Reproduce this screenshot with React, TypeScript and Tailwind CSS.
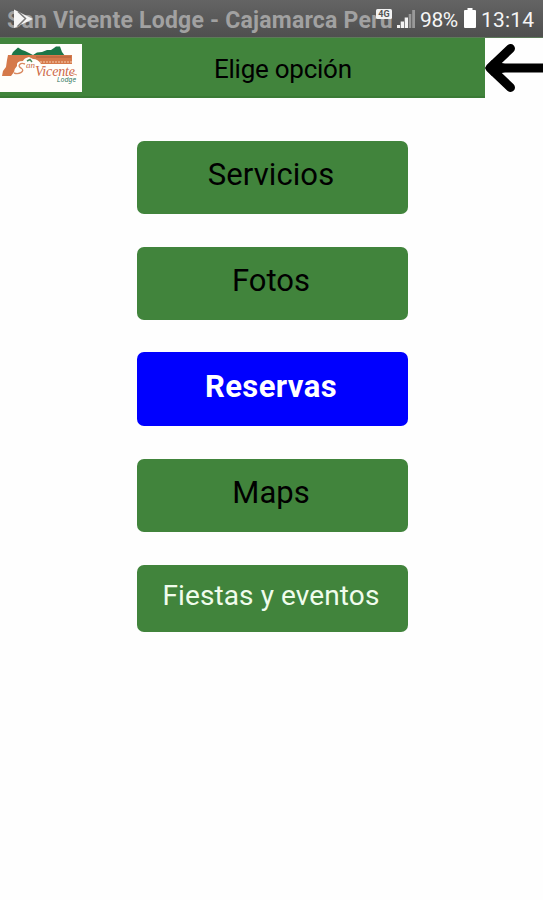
interface MenuOption {
  label: string;
  box: string;
  text: string;
}

const options: MenuOption[] = [
  {
    label: 'Servicios',
    box: 'h-[73px] bg-[#41843c] text-black',
    text: 'pt-[14px] pr-[2px] text-[31px] tracking-[0.1px]',
  },
  {
    label: 'Fotos',
    box: 'mt-[33px] h-[73px] bg-[#41843c] text-black',
    text: 'pt-[14px] pr-[2px] text-[31px]',
  },
  {
    label: 'Reservas',
    box: 'mt-[32px] h-[74px] bg-[#0000ff] text-white',
    text: 'pt-[15px] pr-[2px] text-[31px] font-bold tracking-[0.4px]',
  },
  {
    label: 'Maps',
    box: 'mt-[33px] h-[73px] bg-[#41843c] text-black',
    text: 'pt-[14px] pr-[2px] text-[31px]',
  },
  {
    label: 'Fiestas y eventos',
    box: 'mt-[33px] h-[67px] bg-[#41843c] text-[#f0fcec]',
    text: 'pt-[11px] pr-[2px] text-[28px] tracking-[0.1px]',
  },
];

function StatusBar() {
  return (
    <div className="relative h-[38px] bg-gradient-to-b from-[#646464] to-[#4f4f4f] border-b border-[#5d7a5a]">
      <h1 className="pl-[7px] text-[23px] leading-[41px] font-bold tracking-[0.22px] whitespace-nowrap text-[#a1a1a1]">
        San Vicente Lodge - Cajamarca Perú
      </h1>

      {/* System icons sit on top of the title */}
      <svg className="absolute left-[13px] top-[8px]" width="22" height="22" viewBox="0 0 22 22">
        <path d="M1 1.5L20 11L1 20Z" fill="#f5f5f5" />
        <path d="M5 3.5L12.5 10.5L4.5 18.5" fill="none" stroke="#777" strokeWidth="1.5" />
      </svg>
      <svg className="absolute left-[376px] top-[8px]" width="40" height="22" viewBox="0 0 40 22">
        <rect x="0" y="1" width="16" height="10" rx="1.5" fill="#f3f3f3" />
        <text x="8" y="9.3" textAnchor="middle" fontSize="9" fontWeight="700" fontFamily="Roboto, sans-serif" fill="#555">
          4G
        </text>
        <path d="M21 20V17H24V20ZM24.7 20V13.5H28V20ZM28.7 20V9.5H32V20Z" fill="#f3f3f3" />
        <path d="M32.7 20V6H35.3V20ZM36.2 20V2H39V20Z" fill="#999" />
      </svg>
      <span className="absolute left-[420px] top-0 text-[21px] leading-[41px] tracking-[-0.4px] text-[#f5f5f5]">
        98%
      </span>
      <svg className="absolute left-[464px] top-[8px]" width="12" height="20" viewBox="0 0 12 20">
        <path d="M3.5 0H8.5V2H11Q12 2 12 3V19Q12 20 11 20H1Q0 20 0 19V3Q0 2 1 2H3.5Z" fill="#fff" />
      </svg>
      <span className="absolute left-[481px] top-0 text-[21px] leading-[41px] tracking-[0.2px] text-[#f5f5f5]">
        13:14
      </span>
    </div>
  );
}

function Logo() {
  return (
    <svg className="shrink-0" width="82" height="48" viewBox="0 0 82 48">
      <rect width="82" height="48" fill="#fffefb" />
      <path d="M11 12L13 8L18 3.5L22 6L25 7L33 11L37 8.5L42 8L47 6L51 6L54 4L56 2.5L60 2.5L62 8L65 12Z" fill="#1d7547" />
      <path
        d="M8 11H72V20H41Q38 15 33 15L29 13Q24 14 23 17Q16 17 17 22Q14 25 14 28L11 32H2L3 27L6 23L7 16Z"
        fill="#d5794a"
      />
      <path d="M36 13H71" stroke="#b9673f" strokeWidth="1.5" />
      <path d="M40 18H72" stroke="#eab18f" strokeWidth="1.5" strokeDasharray="2 1" />
      <path d="M25 20C20 18 17 22 21 24C26 27 19 31 14 29" fill="none" stroke="#d98a62" strokeWidth="1.4" />
      <path d="M27 17L30 15.5L32 18" fill="none" stroke="#4a8a5a" strokeWidth="1.5" />
      <text x="26" y="24" fontSize="9" fontStyle="italic" fontFamily="Liberation Serif, serif" fill="#c66a48">
        an
      </text>
      <text
        x="35"
        y="32"
        fontSize="14"
        fontStyle="italic"
        textLength="40"
        fontFamily="Liberation Serif, serif"
        fill="#cd6848"
      >
        Vicente
      </text>
      <path d="M71 29L77 31" stroke="#df9a7d" strokeWidth="1" />
      <text
        x="57"
        y="38"
        fontSize="6.5"
        fontStyle="italic"
        textLength="19"
        fontFamily="Liberation Sans, sans-serif"
        fill="#2c7560"
      >
        Lodge
      </text>
    </svg>
  );
}

function Header() {
  return (
    <header className="flex h-[59.5px]">
      <div className="flex w-[484.5px] border-b-2 border-[#3a7a35] bg-[#41843c] pt-[6px]">
        <Logo />
        <h2 className="ml-[132px] mt-[5px] text-[26px] leading-[40px] tracking-[-0.25px] whitespace-nowrap text-black">
          Elige opción
        </h2>
      </div>
      <button className="w-[58.5px]" aria-label="Volver">
        <svg width="58" height="60" viewBox="0 0 58 60">
          <path d="M5 30H60" fill="none" stroke="#000" strokeWidth="9" />
          <path
            d="M25.5 10.5L5 30L25.5 49.5"
            fill="none"
            stroke="#000"
            strokeWidth="9"
            strokeLinecap="round"
            strokeLinejoin="round"
          />
          <path d="M0 30L7 22L20 26V34L7 38Z" fill="#000" />
        </svg>
      </button>
    </header>
  );
}

export default function App() {
  return (
    <div className="min-h-screen w-full overflow-hidden bg-[#fefefe] font-['Roboto',sans-serif]">
      <StatusBar />
      <Header />

      <main className="flex flex-col pl-[136.5px] pt-[43px]">
        {options.map((option) => (
          <button
            key={option.label}
            className={`flex w-[271px] justify-center rounded-[7px] ${option.box}`}
          >
            <span className={`leading-[40px] whitespace-nowrap ${option.text}`}>{option.label}</span>
          </button>
        ))}
      </main>
    </div>
  );
}
